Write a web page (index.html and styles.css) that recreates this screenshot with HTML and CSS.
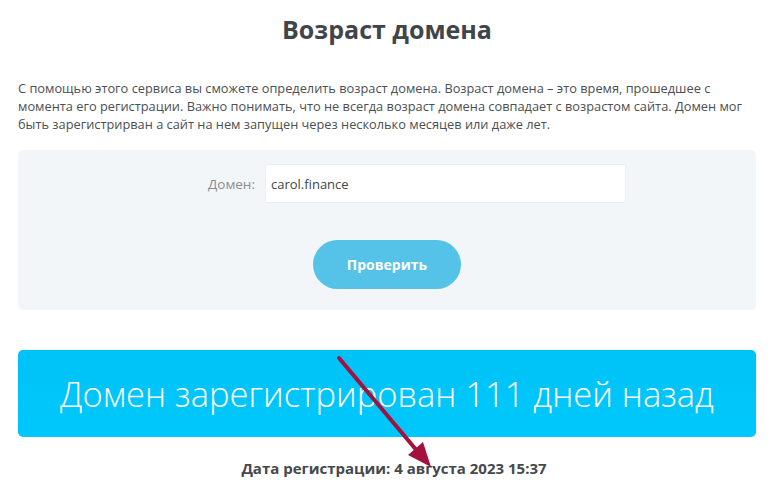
FILE: index.html
```html
<!DOCTYPE html>
<html lang="ru">
<head>
    <meta charset="UTF-8">
    <meta name="viewport" content="width=device-width, initial-scale=1.0">
    <title>Возраст домена</title>
    <link rel="stylesheet" href="styles.css">
</head>
<body>
<div class="page">
    <h1>Возраст домена</h1>
    <p class="intro">С помощью этого сервиса вы сможете определить возраст домена. Возраст домена – это время, прошедшее с момента его регистрации. Важно понимать, что не всегда возраст домена совпадает с возрастом сайта. Домен мог быть зарегистрирван а сайт на нем запущен через несколько месяцев или даже лет.</p>

    <form class="check-form">
        <div class="field">
            <label for="domain">Домен:</label>
            <input type="text" id="domain" name="domain" value="carol.finance">
        </div>
        <button type="submit">Проверить</button>
    </form>

    <div class="result">Домен зарегистрирован 111 дней назад</div>
    <div class="reg-date">Дата регистрации: 4 августа 2023 15:37</div>

    <svg class="arrow" width="780" height="495" viewBox="0 0 780 495">
        <line x1="339" y1="358" x2="418" y2="452" stroke="#a3123f" stroke-width="4" stroke-linecap="round"/>
        <polygon points="431,467 408,455 423,442" fill="#a3123f"/>
    </svg>
</div>
</body>
</html>
```

FILE: styles.css
```css
body {
    margin: 0;
    font-family: "Open Sans", Arial, sans-serif;
    color: #444a4f;
    background-color: #ffffff;
}
.page {
    width: 738px;
    margin-left: 18px;
}
h1 {
    margin: 12px 0 0;
    text-align: center;
    font-size: 25px;
    font-weight: 700;
    line-height: 34px;
    color: #3f4549;
}
.intro {
    margin: 33px 0 0;
    font-size: 12.8px;
    line-height: 18px;
    color: #4a4f53;
}
.check-form {
    margin-top: 17px;
    background-color: #f3f6f8;
    border-radius: 5px;
    padding: 14px 0 21px;
    display: flex;
    flex-direction: column;
    align-items: center;
}
.field {
    display: flex;
    align-items: center;
    gap: 10px;
    margin-left: 60px;
}
.field label {
    font-size: 13.5px;
    color: #8a8d90;
}
.field input {
    width: 361px;
    height: 39px;
    box-sizing: border-box;
    border: 1px solid #eceff1;
    border-radius: 2px;
    padding: 0 5px;
    font-family: "Open Sans", Arial, sans-serif;
    font-size: 13px;
    color: #3f4549;
    background: #ffffff;
}
.check-form button {
    margin-top: 37px;
    width: 148px;
    height: 49px;
    border: none;
    border-radius: 25px;
    background-color: #55c2e8;
    color: #ffffff;
    font-family: "Open Sans", Arial, sans-serif;
    font-weight: 700;
    font-size: 14px;
}
.result {
    margin-top: 40px;
    height: 87px;
    border-radius: 5px;
    background: linear-gradient(#00c2f7, #00c8fc);
    color: #ffffff;
    font-size: 34.5px;
    font-weight: 300;
    display: flex;
    align-items: center;
    justify-content: center;
}
.reg-date {
    margin-top: 21px;
    padding-left: 14px;
    text-align: center;
    font-size: 15px;
    font-weight: 700;
    color: #45494d;
}
.arrow {
    position: absolute;
    top: 0;
    left: 0;
    pointer-events: none;
}
```
